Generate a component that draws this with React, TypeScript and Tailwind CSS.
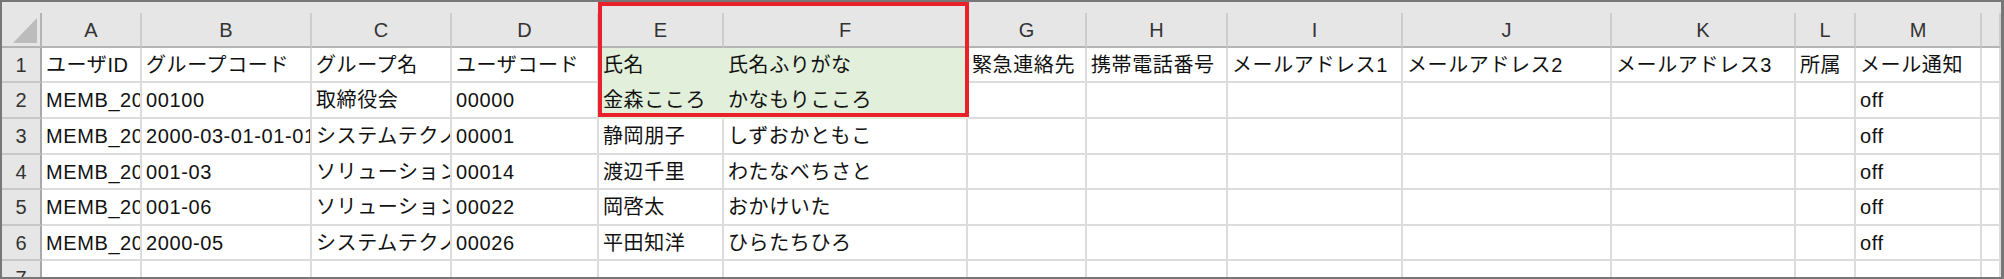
const cols = ['A', 'B', 'C', 'D', 'E', 'F', 'G', 'H', 'I', 'J', 'K', 'L', 'M', '']

const rows: { h: string; cells: string[] }[] = [
  {
    h: 'h-[35px]',
    cells: ['ユーザID', 'グループコード', 'グループ名', 'ユーザコード', '氏名', '氏名ふりがな', '緊急連絡先', '携帯電話番号', 'メールアドレス1', 'メールアドレス2', 'メールアドレス3', '所属', 'メール通知', ''],
  },
  {
    h: 'h-[36px]',
    cells: ['MEMB_2000001', '00100', '取締役会', '00000', '金森こころ', 'かなもりこころ', '', '', '', '', '', '', 'off', ''],
  },
  {
    h: 'h-[36px]',
    cells: ['MEMB_2000002', '2000-03-01-01-01', 'システムテクノロジー部', '00001', '静岡朋子', 'しずおかともこ', '', '', '', '', '', '', 'off', ''],
  },
  {
    h: 'h-[35px]',
    cells: ['MEMB_2000014', '001-03', 'ソリューション部', '00014', '渡辺千里', 'わたなべちさと', '', '', '', '', '', '', 'off', ''],
  },
  {
    h: 'h-[36px]',
    cells: ['MEMB_2000022', '001-06', 'ソリューション部', '00022', '岡啓太', 'おかけいた', '', '', '', '', '', '', 'off', ''],
  },
  {
    h: 'h-[35px]',
    cells: ['MEMB_2000026', '2000-05', 'システムテクノロジー部', '00026', '平田知洋', 'ひらたちひろ', '', '', '', '', '', '', 'off', ''],
  },
  {
    h: 'h-[35px]',
    cells: ['', '', '', '', '', '', '', '', '', '', '', '', '', ''],
  },
]

export default function App() {
  return (
    <div className="relative w-[2004px] h-[279px] overflow-hidden bg-white border-t-2 border-l-2 border-b-2 border-r-[3px] border-[#777777] font-['Liberation_Sans','Noto_Sans_CJK_JP',sans-serif] text-[20px] text-[#111]">
      <div className="h-[11px] bg-[#e6e6e6]" />
      <div className="grid grid-cols-[40px_100px_170px_140px_147px_125px_244px_119px_141px_175px_209px_184px_60px_126px_19px]">
        {/* column header */}
        <div className="h-[35px] bg-[#e6e6e6] border-r-2 border-b-2 border-[#b4b4b4] flex items-end justify-end pr-[3px] pb-[3px]">
          <svg width="24" height="25" viewBox="0 0 24 25">
            <polygon points="24,0 24,25 0,25" fill="#bcbcbc" />
          </svg>
        </div>
        {cols.map((c, i) => (
          <div
            key={i}
            className="h-[35px] bg-[#e6e6e6] border-r-2 border-b-2 border-r-[#cdcdcd] border-b-[#b4b4b4] flex items-center justify-center text-[#333]"
          >
            {c}
          </div>
        ))}

        {rows.map((r, ri) => (
          <div key={ri} className="contents">
            <div className={`${r.h} bg-[#e6e6e6] border-r-2 border-b-2 border-r-[#a8a8a8] border-b-[#c8c8c8] flex items-center justify-center text-[#333]`}>
              {ri + 1}
            </div>
            {r.cells.map((v, ci) => {
              const green = ri < 2 && (ci === 4 || ci === 5)
              return (
                <div
                  key={ci}
                  className={`${r.h} border-r-2 border-b-2 flex items-center pl-[4px] overflow-hidden whitespace-nowrap tracking-[0.6px] ${
                    green ? 'bg-[#e2efda] border-[#e2efda]' : 'bg-white border-[#dcdcdc]'
                  }`}
                >
                  {v}
                </div>
              )
            })}
          </div>
        ))}
      </div>

      <div className="absolute left-[596px] top-0 w-[371px] h-[115px] border-4 border-[#e8212b]" />
    </div>
  )
}
